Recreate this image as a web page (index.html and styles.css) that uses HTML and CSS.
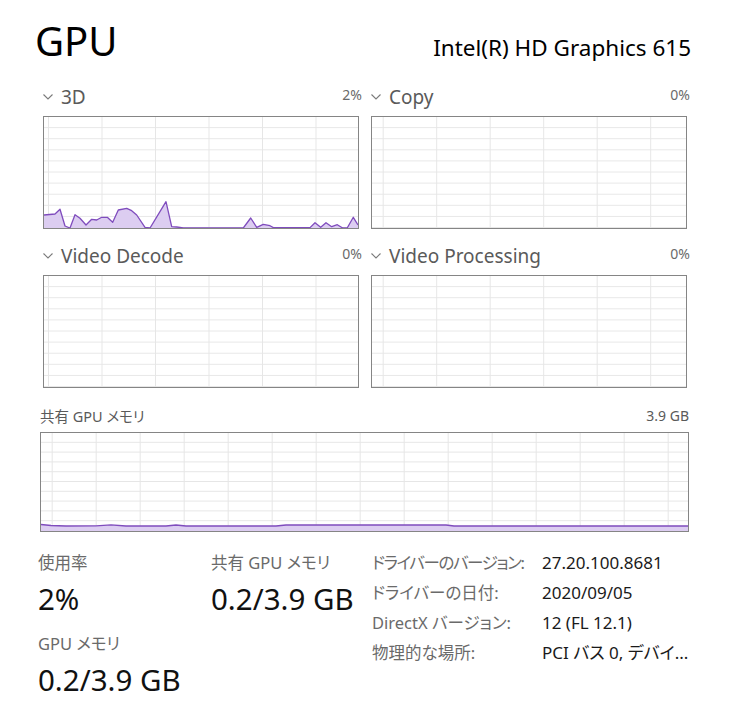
FILE: index.html
```html
<!DOCTYPE html>
<html lang="ja">
<head>
<meta charset="utf-8">
<title>GPU</title>
<link rel="stylesheet" href="styles.css">
</head>
<body>
<div class="page">
  <div class="title-row">
    <div class="title">GPU</div>
    <div class="device">Intel(R) HD Graphics 615</div>
  </div>

  <div class="engines">
    <div class="engine">
      <div class="engine-head">
        <div class="engine-name"><svg class="chev" width="10" height="6" viewBox="0 0 10 6"><polyline points="0.5,0.5 5,5 9.5,0.5"/></svg>3D</div>
        <div class="engine-pct">2%</div>
      </div>
      <div class="graph graph-a">
        <svg class="plot" viewBox="0 0 314 111" preserveAspectRatio="none">
          <polygon class="area" points="0,98 11,97 16,92.3 21,109 26,111 31,97.7 36,101.3 42,108 47.7,102.3 52.7,103 57.7,100.3 63.3,100.3 68.7,105.3 74.3,93 82.7,91.3 87.7,93.7 92.7,98 101,110.3 106,111 122,84.7 127.7,109.7 132.7,110 139.3,111 199.3,111 206.7,101 212.7,110.3 219.3,107.3 226,108.7 229.3,110.6 266,110.6 271,105.7 276.7,110.3 282,105.7 287.7,109.7 293.3,107.7 298.7,111 303.3,110.8 309.3,100.3 314,108 314,111 0,111"/>
          <polyline class="line" points="0,98 11,97 16,92.3 21,109 26,111 31,97.7 36,101.3 42,108 47.7,102.3 52.7,103 57.7,100.3 63.3,100.3 68.7,105.3 74.3,93 82.7,91.3 87.7,93.7 92.7,98 101,110.3 106,111 122,84.7 127.7,109.7 132.7,110 139.3,111 199.3,111 206.7,101 212.7,110.3 219.3,107.3 226,108.7 229.3,110.6 266,110.6 271,105.7 276.7,110.3 282,105.7 287.7,109.7 293.3,107.7 298.7,111 303.3,110.8 309.3,100.3 314,108"/>
        </svg>
      </div>
    </div>

    <div class="engine">
      <div class="engine-head">
        <div class="engine-name"><svg class="chev" width="10" height="6" viewBox="0 0 10 6"><polyline points="0.5,0.5 5,5 9.5,0.5"/></svg>Copy</div>
        <div class="engine-pct">0%</div>
      </div>
      <div class="graph graph-b"></div>
    </div>

    <div class="engine">
      <div class="engine-head">
        <div class="engine-name"><svg class="chev" width="10" height="6" viewBox="0 0 10 6"><polyline points="0.5,0.5 5,5 9.5,0.5"/></svg>Video Decode</div>
        <div class="engine-pct">0%</div>
      </div>
      <div class="graph graph-a"></div>
    </div>

    <div class="engine">
      <div class="engine-head">
        <div class="engine-name"><svg class="chev" width="10" height="6" viewBox="0 0 10 6"><polyline points="0.5,0.5 5,5 9.5,0.5"/></svg>Video Processing</div>
        <div class="engine-pct">0%</div>
      </div>
      <div class="graph graph-b"></div>
    </div>
  </div>

  <div class="mem">
    <div class="mem-head">
      <div class="mem-name">共有 GPU メモリ</div>
      <div class="mem-max">3.9 GB</div>
    </div>
    <div class="graph graph-mem">
      <svg class="plot" viewBox="0 0 647 98" preserveAspectRatio="none">
        <polygon class="area" points="0,91.5 10,92.5 25,93 55,92.8 70,91.9 85,93 125,93 135,92 145,93 235,93 245,92 405,92 413,93 647,93 647,98 0,98"/>
        <polyline class="line" points="0,91.5 10,92.5 25,93 55,92.8 70,91.9 85,93 125,93 135,92 145,93 235,93 245,92 405,92 413,93 647,93"/>
      </svg>
    </div>
  </div>

  <div class="stats">
    <div class="stat-col">
      <div class="stat-label">使用率</div>
      <div class="stat-value">2%</div>
      <div class="stat-label second">GPU メモリ</div>
      <div class="stat-value">0.2/3.9 GB</div>
    </div>
    <div class="stat-col">
      <div class="stat-label">共有 GPU メモリ</div>
      <div class="stat-value">0.2/3.9 GB</div>
    </div>
    <div class="props">
      <div class="prop-key tight">ドライバーのバージョン:</div>
      <div class="prop-val">27.20.100.8681</div>
      <div class="prop-key">ドライバーの日付:</div>
      <div class="prop-val">2020/09/05</div>
      <div class="prop-key">DirectX バージョン:</div>
      <div class="prop-val">12 (FL 12.1)</div>
      <div class="prop-key">物理的な場所:</div>
      <div class="prop-val">PCI バス 0, デバイ...</div>
    </div>
  </div>
</div>
</body>
</html>
```

FILE: styles.css
```css
html, body {
  margin: 0;
  padding: 0;
  background: #ffffff;
}

body {
  font-family: "Noto Sans", "Noto Sans CJK JP", sans-serif;
  font-feature-settings: "palt";
  color: #000;
}

.page {
  width: 729px;
  height: 706px;
  overflow: hidden;
}

.title-row {
  display: flex;
  justify-content: space-between;
  align-items: baseline;
  padding: 17px 38px 0 35px;
  height: 86px;
  box-sizing: border-box;
}

.title {
  font-size: 40px;
  line-height: 48px;
  color: #000;
}

.device {
  font-size: 22.5px;
  line-height: 28px;
  color: #000;
}

.engines {
  display: grid;
  grid-template-columns: 316px 316px;
  column-gap: 12px;
  row-gap: 16px;
  margin-left: 43px;
}

.engine-head {
  display: flex;
  justify-content: space-between;
  align-items: flex-start;
  height: 30px;
  margin-right: -3px;
}

.engine-name {
  display: flex;
  align-items: flex-start;
  font-size: 19px;
  line-height: 20px;
  margin-top: 1px;
  color: #5a5a5a;
}

.chev {
  margin: 7px 8px 0 0;
  flex: none;
}

.chev polyline {
  fill: none;
  stroke: #7a7a7a;
  stroke-width: 1.1;
}

.engine-pct {
  font-size: 14px;
  line-height: 20px;
  color: #6a6a6a;
  margin-top: -1px;
}

.graph {
  box-sizing: border-box;
  border: 1px solid #858585;
  background-color: #fff;
  background-repeat: repeat;
}

.graph-a,
.graph-b {
  width: 316px;
  height: 113px;
  background-image:
    linear-gradient(to right, #e6e6e6 1px, transparent 1px),
    linear-gradient(to top, #e6e6e6 1px, transparent 1px);
  background-size: 53.5px 100%, 100% 11.1px;
}

.graph-a {
  background-position: 4px 0, 0 0;
}

.graph-b {
  background-position: 10.7px 0, 0 0;
}

.plot {
  display: block;
  width: 100%;
  height: 100%;
}

.plot .area {
  fill: #dccdf1;
  stroke: none;
}

.plot .line {
  fill: none;
  stroke: #7f4cbd;
  stroke-width: 1.3;
  vector-effect: non-scaling-stroke;
  stroke-linejoin: round;
}

.mem {
  margin-left: 40px;
  width: 649px;
}

.mem-head {
  display: flex;
  justify-content: space-between;
  align-items: flex-end;
  height: 44px;
  padding-bottom: 6px;
  box-sizing: border-box;
}

.mem-name {
  font-size: 14.5px;
  line-height: 20px;
  color: #5a5a5a;
}

.mem-max {
  font-size: 14px;
  line-height: 20px;
  color: #5a5a5a;
}

.graph-mem {
  width: 649px;
  height: 100px;
  background-image:
    linear-gradient(to right, #e6e6e6 1px, transparent 1px),
    linear-gradient(to top, #e6e6e6 1px, transparent 1px);
  background-size: 44px 100%, 100% 9.8px;
  background-position: 10.7px 0, 0 0;
}

.stats {
  display: grid;
  grid-template-columns: 173px 161px 1fr;
  padding-left: 38px;
  margin-top: 16px;
}

.stat-col {
  display: flex;
  flex-direction: column;
}

.stat-label {
  font-size: 16.5px;
  line-height: 30px;
  color: #6a6a6a;
}

.stat-label.second {
  margin-top: 12px;
}

.stat-value {
  font-size: 29.5px;
  line-height: 36px;
  margin-top: 3px;
  color: #111;
}

.props {
  display: grid;
  grid-template-columns: 170px 1fr;
  grid-auto-rows: 30px;
  line-height: 30px;
}

.prop-key {
  font-size: 16.5px;
  color: #6a6a6a;
  white-space: nowrap;
}

.prop-key.tight {
  letter-spacing: -1.4px;
}

.prop-val {
  font-size: 17px;
  color: #1a1a1a;
  white-space: nowrap;
}
```
